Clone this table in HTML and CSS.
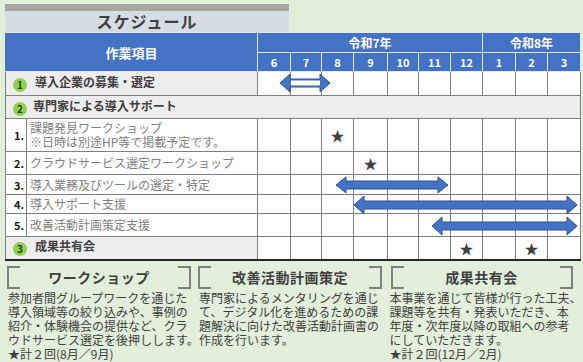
FILE: index.html
```html
<!DOCTYPE html>
<html>
<head>
    <meta charset="utf-8">
    <link rel="stylesheet" href="styles.css">
</head>
<body>

<div class="sheet">
    <div class="title-bar">スケジュール</div>

    <div class="schedule">
        <table class="gantt">
            <colgroup>
                <col class="w21">
                <col class="w231">
                <col class="w33"><col class="w31"><col class="w32"><col class="w34"><col class="w31">
                <col class="w32"><col class="w32"><col class="w33"><col class="w32"><col class="w33">
            </colgroup>
            <tr class="head-year">
                <th colspan="2" rowspan="2" class="head-title">作業項目</th>
                <th colspan="7">令和7年</th>
                <th colspan="3">令和8年</th>
            </tr>
            <tr class="head-month">
                <th>6</th><th>7</th><th>8</th><th>9</th><th>10</th><th>11</th><th>12</th>
                <th>1</th><th>2</th><th>3</th>
            </tr>
            <tr class="h24">
                <td colspan="2" class="phase"><span class="badge">1</span>導入企業の募集・選定</td>
                <td></td><td></td><td></td><td></td><td></td><td></td><td></td><td></td><td></td><td></td>
            </tr>
            <tr class="h23">
                <td colspan="12" class="phase phase-group"><span class="badge">2</span>専門家による導入サポート</td>
            </tr>
            <tr class="h33">
                <td class="step-no">1.</td>
                <td class="step">課題発見ワークショップ<br>※日時は別途HP等で掲載予定です。</td>
                <td></td><td></td><td class="star">★</td><td></td><td></td><td></td><td></td><td></td><td></td><td></td>
            </tr>
            <tr class="h23">
                <td class="step-no">2.</td>
                <td class="step">クラウドサービス選定ワークショップ</td>
                <td></td><td></td><td></td><td class="star">★</td><td></td><td></td><td></td><td></td><td></td><td></td>
            </tr>
            <tr class="h20">
                <td class="step-no">3.</td>
                <td class="step">導入業務及びツールの選定・特定</td>
                <td></td><td></td><td></td><td></td><td></td><td></td><td></td><td></td><td></td><td></td>
            </tr>
            <tr class="h19">
                <td class="step-no">4.</td>
                <td class="step">導入サポート支援</td>
                <td></td><td></td><td></td><td></td><td></td><td></td><td></td><td></td><td></td><td></td>
            </tr>
            <tr class="h23">
                <td class="step-no">5.</td>
                <td class="step">改善活動計画策定支援</td>
                <td></td><td></td><td></td><td></td><td></td><td></td><td></td><td></td><td></td><td></td>
            </tr>
            <tr class="h23 row-last">
                <td colspan="2" class="phase"><span class="badge">3</span>成果共有会</td>
                <td></td><td></td><td></td><td></td><td></td><td></td><td class="star">★</td><td></td><td class="star">★</td><td></td>
            </tr>
        </table>

        <!-- period arrows, drawn in page coordinates -->
        <svg class="arrows" viewBox="5 32 575 229" width="575" height="229">
            <g fill="#4472c4" stroke="#2f528f" stroke-width="1">
                <polygon points="280,83 290,74 290,79 320,79 320,74 330,83 320,92 320,87 290,87 290,92"/>
                <polygon points="336,185 346,177 346,181 438,181 438,177 448,185 438,193 438,189 346,189 346,193"/>
                <polygon points="354,205 364,196 364,201 567,201 567,196 577,205 567,214 567,209 364,209 364,214"/>
                <polygon points="432,226 442,217 442,222 567,222 567,217 577,226 567,235 567,230 442,230 442,235"/>
            </g>
            <rect x="291" y="80.5" width="29" height="5" fill="#fff"/>
        </svg>
    </div>

    <div class="notes">
        <div class="note">
            <div class="note-head">
                <span class="bracket bracket-l"></span>
                <span class="note-title">ワークショップ</span>
                <span class="bracket bracket-r"></span>
            </div>
            <p class="note-body">参加者間グループワークを通じた<br>導入領域等の絞り込みや、事例の<br>紹介・体験機会の提供など、クラ<br>ウドサービス選定を後押しします。<br>★計２回(8月／9月)</p>
        </div>
        <div class="note">
            <div class="note-head">
                <span class="bracket bracket-l"></span>
                <span class="note-title">改善活動計画策定</span>
                <span class="bracket bracket-r"></span>
            </div>
            <p class="note-body">専門家によるメンタリングを通じ<br>て、デジタル化を進めるための課<br>題解決に向けた改善活動計画書の<br>作成を行います。</p>
        </div>
        <div class="note note-last">
            <div class="note-head">
                <span class="bracket bracket-l"></span>
                <span class="note-title">成果共有会</span>
                <span class="bracket bracket-r"></span>
            </div>
            <p class="note-body">本事業を通じて皆様が行った工夫、<br>課題等を共有・発表いただき、本<br>年度・次年度以降の取組への参考<br>にしていただきます。<br>★計２回(12月／2月)</p>
        </div>
    </div>
</div>

</body>
</html>
```

FILE: styles.css
```css
body {
    margin: 0;
    background-color: #e2efda;
    font-family: "Noto Sans CJK JP", "Noto Sans", sans-serif;
    color: #404040;
}

.sheet {
    width: 583px;
    height: 362px;
    padding: 4px 0 0 5px;
    box-sizing: border-box;
    overflow: hidden;
}

.title-bar {
    width: 284px;
    height: 21px;
    border-top: 7px solid #a6a6a6;
    background-color: #d6dce4;
    font-size: 16px;
    font-weight: bold;
    line-height: 21px;
    text-align: center;
    color: #3f3f3f;
    letter-spacing: 1px;
}

.schedule {
    position: relative;
    width: 575px;
}

.gantt {
    width: 575px;
    table-layout: fixed;
    border-collapse: collapse;
    font-size: 12px;
}

.w21 { width: 21px; }
.w231 { width: 231px; }
.w31 { width: 31px; }
.w32 { width: 32px; }
.w33 { width: 33px; }
.w34 { width: 34px; }

.gantt th {
    background-color: #4472c4;
    color: #fff;
    font-weight: bold;
    border: 1px solid #e4eaf6;
    padding: 0;
    line-height: 1;
}

.head-year {
    height: 20px;
}

.head-year th {
    font-size: 12px;
}

.head-month {
    height: 19px;
}

.head-month th {
    font-size: 11px;
}

.gantt th.head-title {
    font-size: 13px;
    border-left-color: #4472c4;
    padding-top: 1px;
}

.gantt td {
    border: 1px solid #808080;
    background-color: #fff;
    padding: 0;
    line-height: 14px;
}

.h19 { height: 19px; }
.h20 { height: 20px; }
.h23 { height: 23px; }
.h24 { height: 24px; }
.h33 { height: 33px; }

.gantt td.phase {
    background-color: #ededed;
    font-weight: bold;
    color: #404040;
    padding-left: 7px;
    white-space: nowrap;
}

.badge {
    display: inline-block;
    width: 14px;
    height: 14px;
    margin-right: 8px;
    border-radius: 50%;
    background-color: #92d050;
    color: #2f3f20;
    font-size: 10px;
    line-height: 14px;
    text-align: center;
    vertical-align: -2px;
}

.phase-group .badge {
    margin-right: 6px;
}

.gantt td.step-no {
    text-align: right;
    padding-right: 2px;
    font-size: 11px;
    font-weight: bold;
    color: #1a1a1a;
}

.gantt td.step {
    padding-left: 3px;
    color: #808080;
    white-space: nowrap;
}

.gantt td.star {
    text-align: center;
    font-size: 14px;
    color: #404040;
}

.row-last td {
    border-bottom: 2px solid #262626;
}

.arrows {
    position: absolute;
    left: 0;
    top: 0;
    pointer-events: none;
}

.notes {
    display: flex;
    margin-top: 5px;
    padding-left: 2px;
}

.note {
    width: 191px;
}

.note + .note {
    width: 198px;
}

.note-last {
    width: 183px;
}

.note-head {
    display: flex;
    width: 184px;
    height: 23px;
}

.note-last .note-head {
    width: 182px;
}

.bracket {
    width: 11px;
    border: 2px solid #7f7f7f;
}

.bracket-l {
    border-right: none;
}

.bracket-r {
    border-left: none;
}

.note-title {
    flex: 1;
    font-size: 14px;
    font-weight: bold;
    line-height: 23px;
    text-align: center;
    color: #404040;
    letter-spacing: 0.5px;
}

.note-body {
    margin: 2px 0 0 1px;
    font-size: 12px;
    line-height: 14px;
    white-space: nowrap;
    color: #404040;
}

.note-last .note-body {
    margin-left: -1px;
}
```
